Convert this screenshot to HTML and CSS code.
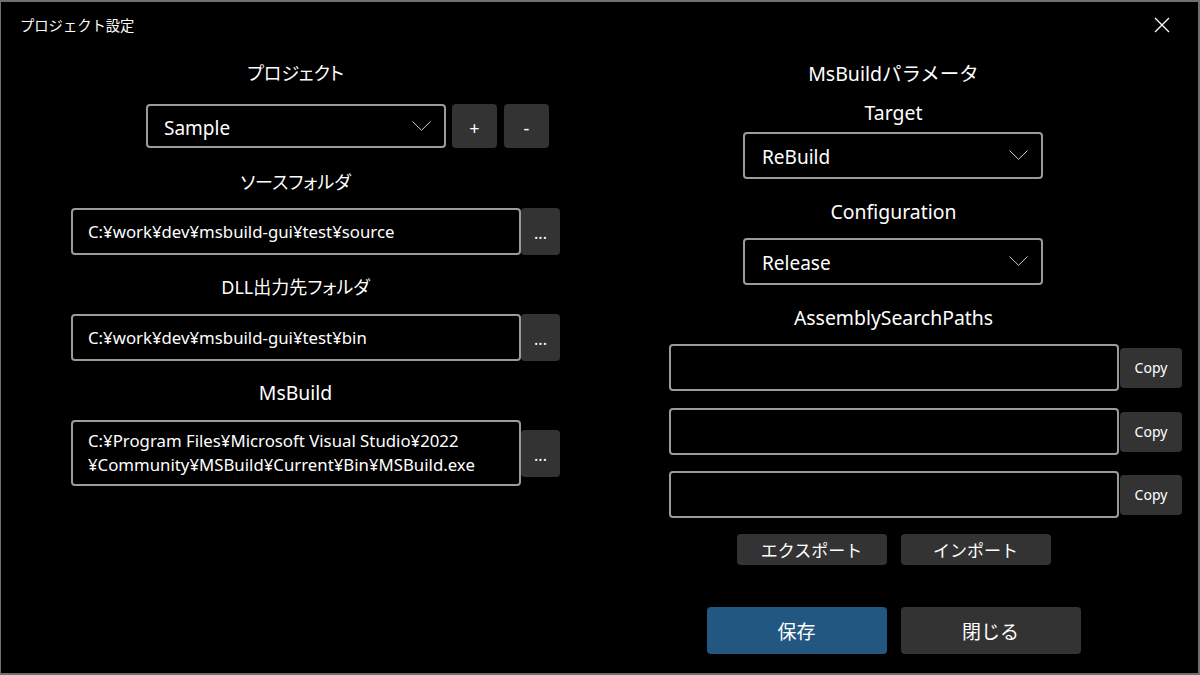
FILE: index.html
```html
<!DOCTYPE html>
<html lang="ja">
<head>
<meta charset="utf-8">
<title>プロジェクト設定</title>
<link rel="stylesheet" href="styles.css">
</head>
<body>
<div class="window">
  <div class="titlebar">
    <span class="title">プロジェクト設定</span>
    <span class="close">
      <svg width="16" height="16" viewBox="0 0 16 16"><path d="M1 1 L15 15 M15 1 L1 15" stroke="#fff" stroke-width="1.3" fill="none"/></svg>
    </span>
  </div>
  <div class="content">
    <div class="col col-left">
      <div class="label jp l-project">プロジェクト</div>
      <div class="project-row">
        <div class="combo combo-project"><span>Sample</span>
          <svg class="chev" width="19" height="10" viewBox="0 0 19 10"><path d="M0.5 0.5 L9.5 9.3 L18.5 0.5" stroke="#cfcfcf" stroke-width="1" fill="none"/></svg>
        </div>
        <div class="btn sq">+</div>
        <div class="btn sq minus">-</div>
      </div>

      <div class="label jp l-src">ソースフォルダ</div>
      <div class="field-row">
        <div class="textbox">C:¥work¥dev¥msbuild-gui¥test¥source</div>
        <div class="btn dots">...</div>
      </div>

      <div class="label jp l-dll">DLL出力先フォルダ</div>
      <div class="field-row">
        <div class="textbox">C:¥work¥dev¥msbuild-gui¥test¥bin</div>
        <div class="btn dots">...</div>
      </div>

      <div class="label latin l-msb">MsBuild</div>
      <div class="field-row">
        <div class="textbox tall">C:¥Program Files¥Microsoft Visual Studio¥2022<br>¥Community¥MSBuild¥Current¥Bin¥MSBuild.exe</div>
        <div class="btn dots">...</div>
      </div>
    </div>

    <div class="col col-right">
      <div class="label l-params">MsBuildパラメータ</div>
      <div class="label latin l-target">Target</div>
      <div class="combo combo-r"><span>ReBuild</span>
        <svg class="chev" width="19" height="10" viewBox="0 0 19 10"><path d="M0.5 0.5 L9.5 9.3 L18.5 0.5" stroke="#cfcfcf" stroke-width="1" fill="none"/></svg>
      </div>
      <div class="label latin l-conf">Configuration</div>
      <div class="combo combo-r"><span>Release</span>
        <svg class="chev" width="19" height="10" viewBox="0 0 19 10"><path d="M0.5 0.5 L9.5 9.3 L18.5 0.5" stroke="#cfcfcf" stroke-width="1" fill="none"/></svg>
      </div>
      <div class="label latin l-asp">AssemblySearchPaths</div>
      <div class="path-row first">
        <div class="textbox"></div>
        <div class="btn copy">Copy</div>
      </div>
      <div class="path-row second">
        <div class="textbox"></div>
        <div class="btn copy">Copy</div>
      </div>
      <div class="path-row third">
        <div class="textbox"></div>
        <div class="btn copy">Copy</div>
      </div>
      <div class="io-row">
        <div class="btn io">エクスポート</div>
        <div class="btn io">インポート</div>
      </div>
      <div class="action-row">
        <div class="btn action primary">保存</div>
        <div class="btn action">閉じる</div>
      </div>
    </div>
  </div>
</div>
</body>
</html>
```
FILE: styles.css
```css
* { box-sizing: border-box; }
html, body { margin: 0; padding: 0; background: #000; }
body {
  font-family: "Noto Sans", "Noto Sans CJK JP", sans-serif;
  color: #fff;
}
.window {
  width: 1200px;
  height: 675px;
  border: 2px solid #6f6f6f;
  border-left-width: 1px;
  background: #000;
  display: flex;
  flex-direction: column;
}
.titlebar {
  height: 46px;
  display: flex;
  align-items: center;
  justify-content: space-between;
  padding: 0 28px 0 19px;
}
.title {
  font-family: "Noto Sans CJK JP", sans-serif;
  font-size: 14.3px;
  line-height: 20px;
}
.close { display: flex; width: 16px; height: 16px; }
.content {
  display: flex;
  padding-left: 70px;
}
.col { display: flex; flex-direction: column; }
.col-left { width: 489px; }
.col-right { width: 513px; margin-left: 109px; }

.label {
  width: 449px;
  text-align: center;
  font-size: 18px;
  line-height: 24px;
  font-family: "Noto Sans", "Noto Sans CJK JP", sans-serif;
}
.label.latin { font-size: 19.4px; }
.jp { font-feature-settings: "palt"; }
.l-project { margin-top: 13px; }
.l-src { margin-top: 22px; }
.l-dll { margin-top: 20px; }
.l-msb { margin-top: 20px; }
.l-params { margin-top: 14px; font-size: 19.5px; }
.l-target { margin-top: 15px; }
.l-conf { margin-top: 21px; }
.l-asp { margin-top: 21px; }

.project-row {
  display: flex;
  align-items: stretch;
  margin-top: 19px;
  padding-left: 75px;
  height: 44px;
}
.combo {
  width: 300px;
  border: 2px solid #9b9b9b;
  border-radius: 4px;
  display: flex;
  align-items: center;
  justify-content: space-between;
  padding: 4px 13px 0 16px;
  font-size: 19px;
}
.combo .chev { margin-top: -4px; }
.combo-r { height: 47px; margin-left: 74px; padding-left: 17px; padding-top: 3px; }
.l-target + .combo-r { margin-top: 7px; }
.l-conf + .combo-r { margin-top: 14px; }

.btn {
  background: #333333;
  border-radius: 4px;
  display: flex;
  align-items: center;
  justify-content: center;
  color: #fff;
}
.sq { width: 45px; margin-left: 6px; font-size: 18px; padding-top: 3px; }
.sq.minus { margin-left: 7px; }

.field-row {
  display: flex;
  align-items: center;
  margin-top: 14px;
}
.l-dll + .field-row { margin-top: 15px; }
.l-msb + .field-row { margin-top: 15px; }
.textbox {
  width: 450px;
  height: 47px;
  border: 2px solid #9b9b9b;
  border-radius: 4px;
  padding: 0 15px;
  font-size: 16.8px;
  line-height: 24px;
  display: flex;
  align-items: center;
}
.textbox.tall { height: 66px; }
.dots {
  width: 39px;
  height: 47px;
  font-size: 16px;
  align-items: flex-end;
  padding-bottom: 14px;
  line-height: 1;
}

.path-row {
  display: flex;
  align-items: center;
}
.path-row .textbox { width: 450px; height: 47px; }
.path-row.first { margin-top: 14px; }
.path-row.second { margin-top: 17px; }
.path-row.third { margin-top: 16px; }
.copy {
  width: 62px;
  height: 40px;
  margin-left: 1px;
  font-size: 14px;
}
.io-row {
  width: 449px;
  display: flex;
  justify-content: center;
  gap: 14px;
  margin-top: 16px;
}
.io {
  width: 150px;
  height: 31px;
  font-family: "Noto Sans CJK JP", sans-serif;
  font-size: 17px;
}
.action-row {
  width: 449px;
  display: flex;
  justify-content: center;
  gap: 14px;
  margin-top: 42px;
}
.action {
  width: 180px;
  height: 47px;
  font-family: "Noto Sans CJK JP", sans-serif;
  font-size: 19px;
}
.primary { background: #215780; }
```
